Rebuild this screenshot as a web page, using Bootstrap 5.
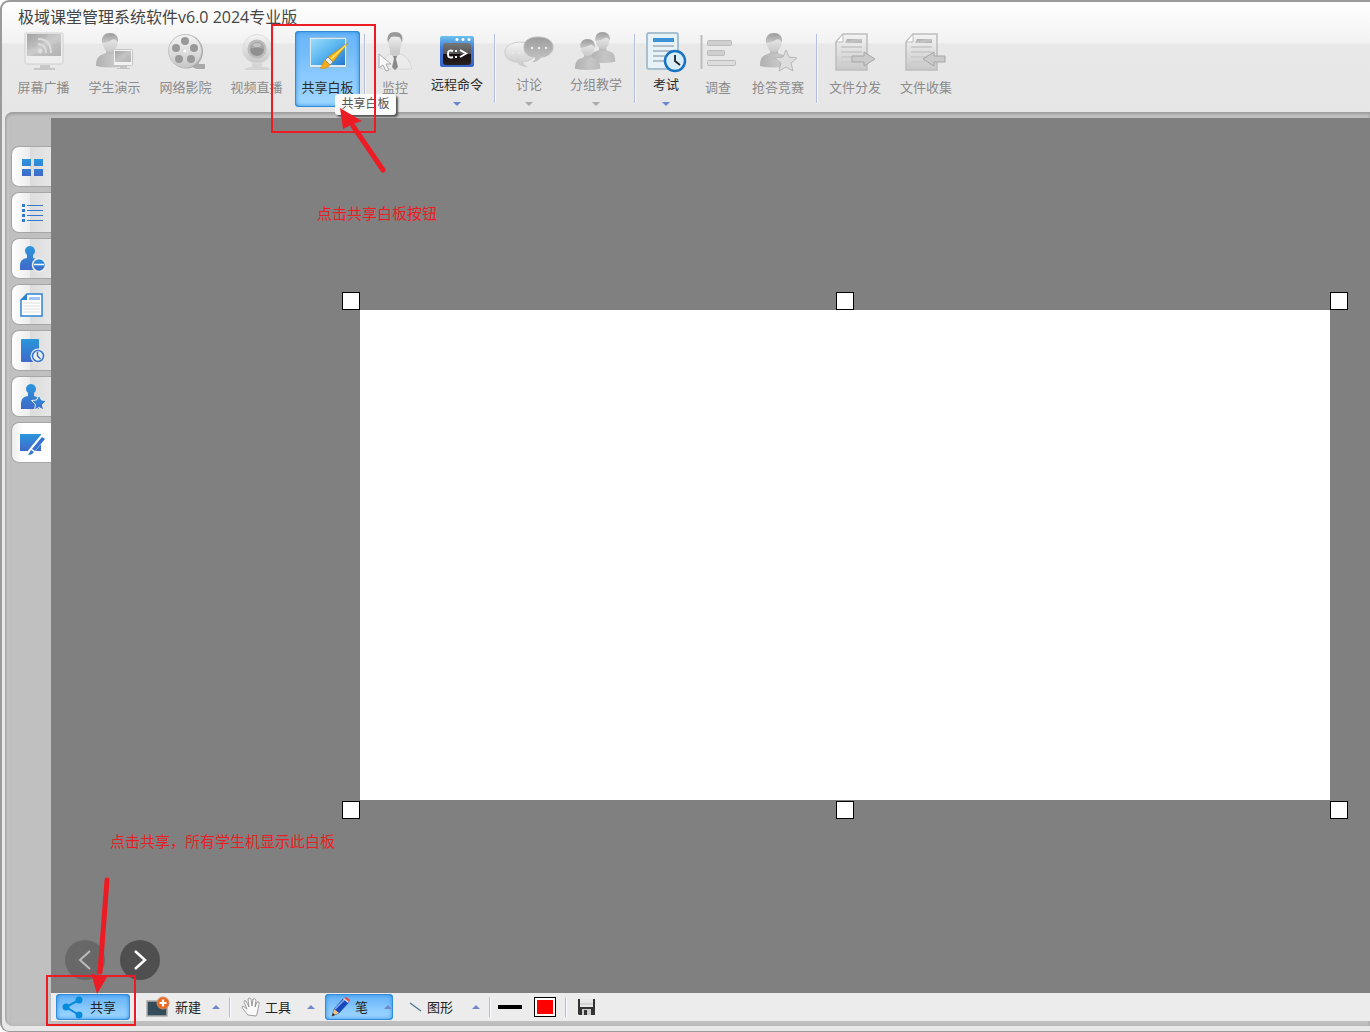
<!DOCTYPE html>
<html lang="zh-CN">
<head>
<meta charset="utf-8">
<meta name="viewport" content="width=device-width, initial-scale=1">
<title>极域课堂管理系统软件v6.0 2024专业版</title>
<link href="https://cdn.jsdelivr.net/npm/bootstrap@5.3.0/dist/css/bootstrap.min.css" rel="stylesheet">
<script src="https://cdn.jsdelivr.net/npm/bootstrap@5.3.0/dist/js/bootstrap.bundle.min.js"></script>
<style>
body{font-family:"Open Sans","Noto Sans CJK SC",sans-serif;font-size:13px;line-height:18px;color:#222;background:#fff}
svg{display:block;flex:none;overflow:visible}
.app-window{min-height:100vh;border:1px solid #999;border-width:2px 0 1px 2px;border-color:#9b9b9b;border-radius:9px 0 0 9px;background:#e8e8e8;padding:0 0 5px 3px}
.app-head{height:110px;margin-left:-3px;border-radius:8px 0 0 0;background:linear-gradient(#fff,#f2f2f2 41px,#e8e8e8 42px,#e6e6e6)}
.app-title{font-size:16px;line-height:24px;font-weight:400;color:#444;margin:0;padding:3px 0 2px 16px}
.ribbon{display:grid;grid-template-columns:repeat(5,71px) 4px 56px 68px 8px 60px 74px 4px 58px 46px 74px 4px 72px 70px;padding-left:6px}
.tool{border:0;background:none;padding:0;height:76px;display:flex;flex-direction:column;align-items:center;color:#2b2b2b;white-space:nowrap;width:100%}
.tool:disabled{color:#8b8b8b}
.tool .cap{margin-top:5px}
.tool.has-menu .cap{margin-top:2px}
.tool.has-menu::after{content:"";border:4px solid transparent;border-top-color:#6b86cc;border-bottom:0;margin-top:9px}
.tool.has-menu:disabled::after{border-top-color:#aaa}
.tool.picked{width:65px;margin:0 auto}
.picked{border-radius:4px;background:linear-gradient(#68b5fa,#74bdfa 30%,#8ccbff 60%,#a0d8ff);box-shadow:inset 0 0 0 1px #318ddb,inset 0 0 4px 1px #2f8fe0}
.vbar{width:2px;background:#b3bde2;border-right:1px solid #f8f8ff;justify-self:center;height:69px;margin-top:3px}
.vbar-s{width:2px;height:20px;background:#b3bde2;border-right:1px solid #f8f8ff}
.app-body{border-radius:8px 0 0 8px;background:linear-gradient(90deg,#a8a8a8,#c8c8c8 3px,#bbb 5px,#c1c1c1 6px);padding:6px 0 5px 6px;box-shadow:inset 0 2px 3px #999,inset 0 -3px 3px #bbb}
.rail{width:40px;padding:28px 0 0;background:#c0c0c0}
.rail-tab{display:flex;align-items:center;justify-content:center;width:40px;height:41px;border:1px solid #a6a6a6;border-right:0;border-radius:8px 0 0 8px;background:linear-gradient(90deg,#fff,#ececec 45%,#dcdcdc 47%,#e6e6e6);padding:0}
.rail-tab.current{background:linear-gradient(90deg,#eee,#fff 30%)}
.stage{background:#808080;padding:192px 40px 193px 309px;flex:1 1 auto}
.board{background:#fff;min-height:490px;flex:1}
.grip{position:absolute;width:18px;height:18px;background:#fff;border:1px solid #000}
.g-t{top:-18px}.g-b{bottom:-19px}.g-l{left:-18px}.g-c{left:calc(50% - 9px)}.g-r{right:-18px}
.pager{position:absolute;left:14px;bottom:13px;gap:15px}
.page-btn{width:40px;height:40px;border:0;border-radius:50%;background:#4f4f4f;padding:0;display:flex;align-items:center;justify-content:center}
.page-btn:disabled{background:#686868}
.drawbar{background:#ececec;height:28px}
.dbtn{border:0;background:none;padding:0;height:26px;display:flex;align-items:center;color:#222;white-space:nowrap}
.dbtn.picked{background:linear-gradient(#68b5fa,#74bdfa 30%,#8ccbff 60%,#a0d8ff)}
.up::after{content:"";border:4px solid transparent;border-bottom-color:#7288c6;border-top:0;margin-left:auto}
.d-share{width:74px;margin:0 5px;padding-left:6px;gap:7px}
.d-new{width:74px;margin:0 9px;gap:6px}
.d-hand{width:74px;margin:0 10px;gap:4px}
.d-pen{width:68px;padding:0 1px 0 6px;gap:4px}
.d-shape{width:71px;margin:0 9px 0 16px;gap:6px}
.d-line{width:24px;height:4px;background:#000;margin:0 12px 0 7px;border:0;padding:0}
.d-color{width:22px;height:20px;border:1px solid #000;background:#f00;box-shadow:inset 0 0 0 2px #fff;padding:0;margin-right:9px}
.d-save{margin-left:10px}
.tip{position:absolute;left:335px;top:94px;width:61px;height:21px;line-height:20px;font-size:12px;text-align:center;color:#555;background:#fafafa;border-radius:3px;box-shadow:2px 2px 2px #555}
.note{position:absolute;color:#ed1c24;font-size:15px;line-height:22px;white-space:nowrap}
.n-top{left:317px;top:202px}
.n-bottom{left:110px;bottom:180px}
.mark-box{position:absolute;border:2px solid #ed1c24;pointer-events:none}
.m-top{left:271px;top:24px;width:105px;height:109px}
.m-bottom{left:46px;bottom:6px;width:90px;height:51px}
.arrow{position:absolute;pointer-events:none}
.a-top{left:336px;top:104px}
.a-bottom{left:86px;bottom:36px}
</style>
</head>
<body>
<svg width="0" height="0" class="position-absolute" aria-hidden="true">
<defs>
<linearGradient id="gl" x2="0" y2="1"><stop stop-color="#f4f4f4"/><stop offset="1" stop-color="#c8c8c8"/></linearGradient>
<linearGradient id="gm" x2="0" y2="1"><stop stop-color="#9c9c9c"/><stop offset="1" stop-color="#c8c8c8"/></linearGradient>
<linearGradient id="gd" x2="1" y2="1"><stop stop-color="#a4a4a4"/><stop offset=".5" stop-color="#c4c4c4"/><stop offset="1" stop-color="#b2b2b2"/></linearGradient>
<linearGradient id="gs" x2="1" y2="0"><stop stop-color="#b0b0b0"/><stop offset=".6" stop-color="#c6c6c6"/><stop offset="1" stop-color="#bababa"/></linearGradient>
<linearGradient id="bl" x2="0" y2="1"><stop stop-color="#2b96dc"/><stop offset="1" stop-color="#3f69c9"/></linearGradient>
<linearGradient id="sky" x2="1" y2="1"><stop stop-color="#9bddfb"/><stop offset=".5" stop-color="#58b5ef"/><stop offset="1" stop-color="#2277cf"/></linearGradient>
<linearGradient id="cm" x2="0" y2="1"><stop stop-color="#6bc3ee"/><stop offset=".4" stop-color="#4278d8"/><stop offset="1" stop-color="#3665c8"/></linearGradient>
<linearGradient id="bk" x2="0" y2="1"><stop stop-color="#777"/><stop offset=".48" stop-color="#555"/><stop offset=".5" stop-color="#161010"/><stop offset="1" stop-color="#2a2020"/></linearGradient>
<g id="person"><path d="M0 33c0-8 3-11 8-12l3-2h6l3 2c6 1 8 4 8 12q-14 3-28 0z" fill="url(#gs)"/><path d="M10 15h8v5q-4 4-8 0z" fill="#bdbdbd"/><ellipse cx="14" cy="9.500" rx="7.500" ry="9.500" fill="url(#gl)"/><path d="M6 10C5 3 9 0 14 0s9 3 8 10q-1-3-4-4-5 3-12 4z" fill="url(#gm)"/></g>
<g id="sheet"><path d="M10 3h24v36H3V11z" fill="url(#gl)" stroke="#bdbdbd" stroke-width="1.500"/><path d="M3 11l7-8v8z" fill="#fff" stroke="#bbb"/><path d="M14 8h15v4H12z" fill="url(#gd)"/><path d="M8 16h21M8 21h21M8 26h21M8 31h14" stroke="#ccc" stroke-width="2"/></g>
</defs>
</svg>

<div class="app-window d-flex flex-column position-relative overflow-hidden">
<header class="app-head">
<h1 class="app-title">极域课堂管理系统软件v6.0 2024专业版</h1>
<nav class="ribbon" aria-label="课堂工具">
<button class="tool" disabled><svg width="44" height="42"><rect x="3" y="2" width="38" height="31" rx="1" fill="#eee" stroke="#d0d0d0"/><rect x="5" y="3" width="34" height="22" fill="url(#gd)"/><path d="M5 18C18 17 24 10 26 3h13v8C28 12 20 20 8 25H5z" fill="#fff" opacity=".12"/><circle cx="18" cy="20" r="2.500" fill="#ddd"/><path d="M16 13q8 0 8 9M16 8q13 0 13 14" fill="none" stroke="#ddd" stroke-width="2"/><path d="M18 34h10v3h5v2H12v-2h6z" fill="#c7c7c7"/></svg><span class="cap">屏幕广播</span></button>
<button class="tool" disabled><svg width="44" height="42"><use href="#person" x="3" y="2"/><rect x="20.500" y="18.500" width="19" height="16" rx="1" fill="#f2f2f2" stroke="#c4c4c4"/><rect x="22" y="20" width="16" height="11" fill="url(#gd)"/><path d="M27 35h7v2h3v1H24v-1h3z" fill="#c4c4c4"/></svg><span class="cap">学生演示</span></button>
<button class="tool" disabled><svg width="44" height="42"><path d="M25 33q5 5 9 5h7v-5h-6l-2-4z" fill="#aaa"/><circle cx="22" cy="20.500" r="17" fill="#a6a6a6"/><circle cx="21" cy="20" r="16.500" fill="url(#gl)" stroke="#c4c4c4"/><g fill="#999"><circle cx="21" cy="10" r="4"/><circle cx="12" cy="17" r="4"/><circle cx="30" cy="17" r="4"/><circle cx="15" cy="28" r="4"/><circle cx="27" cy="28" r="4"/></g><circle cx="21" cy="20" r="1.500" fill="#fff"/></svg><span class="cap">网络影院</span></button>
<button class="tool" disabled><svg width="44" height="42"><path d="M9 39q3-3 8-3v-5h10v5q7 0 9 3z" fill="#d5d5d5"/><circle cx="22" cy="18" r="14.500" fill="url(#gl)" stroke="#ddd"/><circle cx="22" cy="18" r="9.500" fill="#bbb"/><circle cx="22" cy="18" r="7" fill="#909090"/><path d="M15 18a7 7 0 0 1 14 0q-7-3-14 0z" fill="#aaa"/><ellipse cx="22" cy="14" rx="4" ry="2" fill="#c4c4c4"/></svg><span class="cap">视频直播</span></button>
<button class="tool picked"><svg width="44" height="42"><rect x="3.500" y="6.500" width="37" height="30" rx="1" fill="#dcebf5" stroke="#94bbd3"/><rect x="5" y="8" width="34" height="26" fill="url(#sky)"/><path d="M42 12L27 31l-5-5z" fill="#f7b51b" stroke="#c98510" stroke-width=".7"/><path d="M40 14L25 28" stroke="#ffe56d" stroke-width="1.500"/><path d="M22 26l5 5-3 3-5-5z" fill="#eee" stroke="#777" stroke-width=".7"/><path d="M19 29l5 5c-2 3-6 4-10 3 3-1 2-6 5-8z" fill="#f4ad18" stroke="#c98510" stroke-width=".6"/></svg><span class="cap">共享白板</span></button>
<span class="vbar"></span>
<button class="tool" disabled><svg width="44" height="42"><path d="M8 38q0-12 9-15h10q9 2 12 15z" fill="#ebebeb" stroke="#d8d8d8"/><path d="M17 18h10v5l-5 4-5-4z" fill="#ccc"/><ellipse cx="22" cy="12" rx="6.500" ry="10" fill="url(#gl)"/><path d="M15 12C13 4 17 1 22 1s9 3 7 11q-1-5-3-6-5-1-8 0-2 2-3 6z" fill="#999"/><path d="M20 25h4l-1 3 2 8-3 3-3-3 2-8z" fill="#888"/><path d="M6 23v14l4-3 3 6 3-1-3-6h5z" fill="#f7f7f7" stroke="#aaa"/></svg><span class="cap">监控</span></button>
<button class="tool has-menu"><svg width="44" height="42"><rect x="5" y="5" width="34" height="31" rx="2" fill="url(#cm)"/><rect x="8" y="12" width="28" height="22" rx="3" fill="url(#bk)"/><g fill="#fff"><circle cx="22" cy="8.500" r="1.500"/><circle cx="28" cy="8.500" r="1.500"/><circle cx="34" cy="8.500" r="1.500"/></g><path d="M18 20q-5-2-5 3t5 3M25 19l6 3.500-6 3.500" fill="none" stroke="#fff" stroke-width="2"/><path d="M20 19h2v2h-2zM20 25h2v2h-2z" fill="#fff"/></svg><span class="cap">远程命令</span></button>
<span class="vbar"></span>
<button class="tool has-menu" disabled><svg width="44" height="42"><path d="M13 11c8 0 15 4 15 10S22 31 15 31q2 4 5 5-7-1-10-5C3 31-2 27-2 21s7-10 15-10z" fill="url(#gl)" stroke="#ccc"/><path d="M31 6c9 0 15 4 15 10s-6 10-12 10q-3 4-8 5 3-2 3-5c-8 0-12-4-12-10S22 6 31 6z" fill="url(#gm)" stroke="#bbb"/><g fill="#eee"><circle cx="25" cy="17" r="1.200"/><circle cx="32" cy="17" r="1.200"/><circle cx="39" cy="17" r="1.200"/><circle cx="6" cy="22" r="1"/><circle cx="12" cy="22" r="1"/></g></svg><span class="cap">讨论</span></button>
<button class="tool has-menu" disabled><svg width="44" height="42"><g transform="translate(16 1) scale(.9)"><use href="#person"/></g><g transform="translate(1 8) scale(.9)"><use href="#person"/></g></svg><span class="cap">分组教学</span></button>
<span class="vbar"></span>
<button class="tool has-menu"><svg width="44" height="42"><rect x="3" y="2" width="31" height="36" rx="2" fill="#e7f1f8" stroke="#a8bfcd" stroke-width="2"/><path d="M9 7h21v4H9z" fill="#3b93d5"/><path d="M9 15h21M9 20h21M9 25h12M9 30h12" stroke="#b3c0ca" stroke-width="2"/><circle cx="31" cy="30" r="10" fill="#d7eefa" stroke="#1874c1" stroke-width="2.500"/><path d="M31 24v6l5 4" fill="none" stroke="#222" stroke-width="1.800"/></svg><span class="cap">考试</span></button>
<button class="tool" disabled><svg width="44" height="42"><path d="M5.500 4v34" stroke="#bdbdbd" stroke-width="2"/><g fill="#cfcfcf" stroke="#bcbcbc"><rect x="11.500" y="9.500" width="24" height="5" rx="1"/><rect x="11.500" y="19.500" width="17" height="5" rx="1"/><rect x="11.500" y="29.500" width="28" height="5" rx="1" fill="#ddd"/></g></svg><span class="cap">调查</span></button>
<button class="tool" disabled><svg width="44" height="42"><use href="#person" x="4" y="2"/><path d="M30 19l3 7 8 1-6 5 2 8-7-4-7 4 2-8-6-5 8-1z" fill="#ddd" stroke="#b8b8b8"/></svg><span class="cap">抢答竞赛</span></button>
<span class="vbar"></span>
<button class="tool" disabled><svg width="44" height="42"><use href="#sheet"/><path d="M19 25h12v-4l11 7-11 7v-4H19z" fill="#cacaca" stroke="#a6a6a6"/></svg><span class="cap">文件分发</span></button>
<button class="tool" disabled><svg width="44" height="42"><use href="#sheet" x="-1"/><path d="M41 25H30v-4l-11 7 11 7v-4h11z" fill="#cacaca" stroke="#a6a6a6"/></svg><span class="cap">文件收集</span></button>
</nav>
</header>

<div class="app-body d-flex flex-grow-1">
<nav class="rail flex-shrink-0" aria-label="视图">
<div class="d-grid" style="row-gap:5px">
<button class="rail-tab" aria-label="监视"><svg width="26" height="26" fill="url(#bl)"><path d="M3 5h9v7H3zM15 5h9v7h-9zM3 15h9v7H3zM15 15h9v7h-9z"/></svg></button>
<button class="rail-tab" aria-label="列表"><svg width="26" height="26" fill="#3278d0"><path d="M3 4h3v3H3zM3 9h3v3H3zM3 14h3v3H3zM3 19h3v3H3zM8 5h16v1H8zM8 10h16v1H8zM8 15h16v1H8zM8 20h16v1H8z"/></svg></button>
<button class="rail-tab" aria-label="学生"><svg width="26" height="26" fill="url(#bl)"><path d="M6 5a5 5 0 1 1 8 4v3q6 1 6 6v6H1v-5q0-6 7-7V9q-2-2-2-4z"/><circle cx="20" cy="19" r="6.500" stroke="#eee" stroke-width="1.500"/><path d="M15 18.500h10" stroke="#fff" stroke-width="1.500"/></svg></button>
<button class="rail-tab" aria-label="文件"><svg width="26" height="26"><path d="M8 2h15v22H2V8z" fill="#fff" stroke="#2c83d4" stroke-width="1.500"/><path d="M8 2v6H2z" fill="#2c83d4"/><path d="M10 5h11v3H10z" fill="#9cc4f5"/><path d="M4 11h17M4 14h17M4 17h17M4 20h17" stroke="#ddd"/></svg></button>
<button class="rail-tab" aria-label="考试"><svg width="26" height="26"><rect x="2" y="1" width="18" height="23" rx="1" fill="url(#bl)"/><circle cx="19" cy="18" r="7.500" fill="#e8e8e8"/><circle cx="19" cy="18" r="5.500" fill="#eee" stroke="#3474cf" stroke-width="1.500"/><path d="M18.500 14v4l3 3" fill="none" stroke="#3474cf" stroke-width="1.500"/></svg></button>
<button class="rail-tab" aria-label="竞赛"><svg width="26" height="26" fill="url(#bl)"><path d="M7 5a5 5 0 1 1 8 4v3q5 1 5 6v7H2v-6q0-6 7-7V9q-2-2-2-4z"/><path d="M20 11l2.500 5 5 .5-4 4 1 5.500-4.500-2.500-4.500 2.500 1-5.500-4-4 5-.5z" stroke="#eee" stroke-width="1"/></svg></button>
<button class="rail-tab current" aria-label="白板"><svg width="26" height="26"><path d="M1 4h21v17H1z" fill="url(#bl)"/><path d="M25 6L14 19l-3 4" stroke="#fff" stroke-width="6" fill="none"/><path d="M23 7l3 2-10 12-3-2zM12 20l3 2q-2 3-6 3 2-3 3-5z" fill="#3474cf"/></svg></button>
</div>
</nav>
<main class="d-flex flex-column flex-grow-1">
<section class="stage d-flex position-relative">
<div class="board position-relative" role="img" aria-label="白板"><i class="grip g-t g-l"></i><i class="grip g-t g-c"></i><i class="grip g-t g-r"></i><i class="grip g-b g-l"></i><i class="grip g-b g-c"></i><i class="grip g-b g-r"></i></div>
<div class="pager d-flex">
<button class="page-btn" disabled aria-label="上一页"><svg width="20" height="20"><path d="M15 1L5 10l10 9" fill="none" stroke="#bbb" stroke-width="2"/></svg></button>
<button class="page-btn" aria-label="下一页"><svg width="20" height="20"><path d="M5 1l10 9-10 9" fill="none" stroke="#fff" stroke-width="2.500"/></svg></button>
</div>
</section>
<div class="drawbar d-flex align-items-center" role="toolbar" aria-label="绘图工具">
<button class="dbtn picked d-share"><svg width="21" height="22"><path d="M17 4L4 11l13 8" fill="none" stroke="#078bdc" stroke-width="2"/><g fill="#078bdc"><circle cx="17" cy="4" r="3.500"/><circle cx="4" cy="11" r="3.500"/><circle cx="17" cy="19" r="3.500"/></g></svg>共享</button>
<span class="vbar-s"></span>
<button class="dbtn up d-new"><svg width="23" height="22"><rect x="1" y="5" width="20" height="15" fill="#344b59" stroke="#aaa" stroke-width="1.500"/><circle cx="17" cy="7" r="6" fill="#f06a20" stroke="#cf8a60"/><path d="M17 3.500v7M13.500 7h7" stroke="#fff" stroke-width="2.200"/></svg>新建</button>
<span class="vbar-s"></span>
<button class="dbtn up d-hand"><svg width="20" height="20"><path d="M7 18L2 12Q0 9 2 9l4 3L3 5q0-2 2-1l3 6L7 2q2-2 3 0l1 7 1-7q2-1 3 1l-1 7 2-5q3-1 2 2l-2 10-1 2z" fill="#fafafa" stroke="#888" stroke-width=".8"/></svg>工具</button>
<button class="dbtn picked up d-pen"><svg width="20" height="20"><path d="M1 19l2-7L13 1l5 4L8 16z" fill="#1749bd" stroke="#183a8b" stroke-width=".6"/><path d="M4 12L14 2" stroke="#8ab6ff" stroke-width="1.500"/><path d="M13 1q3-2 6 2l-1 2z" fill="#e94949"/><path d="M12 2l5 4 1-1-5-4z" fill="#ddd"/><path d="M1 19l2-7 5 4z" fill="#efc481"/><path d="M1 19l1-3 2 2z" fill="#222"/></svg>笔</button>
<button class="dbtn up d-shape"><svg width="12" height="10"><path d="M1 1l11 8" stroke="#48758f" stroke-width="1.300"/></svg>图形</button>
<span class="vbar-s"></span>
<button class="d-line" aria-label="线宽"></button>
<button class="d-color" aria-label="颜色"></button>
<span class="vbar-s"></span>
<button class="dbtn d-save" aria-label="保存"><svg width="19" height="18"><path d="M1 1h17v16H2l-1-1z" fill="#333"/><path d="M3 1h13v8H3z" fill="#e6e6e6"/><path d="M3 6h13" stroke="#bbb"/><path d="M5 11h9v6H5z" fill="#ccc"/><path d="M7 12h3v5H7z" fill="#333"/></svg></button>
</div>
</main>
</div>
</div>

<div class="tip" role="tooltip">共享白板</div>
<div class="mark-box m-top"></div>
<svg class="arrow a-top" width="52" height="70" fill="#ed1c24"><path d="M47 66L17 22" stroke="#ed1c24" stroke-width="5" stroke-linecap="round"/><path d="M4 4l22 13-9 3-10 5z"/></svg>
<div class="note n-top">点击共享白板按钮</div>
<div class="note n-bottom">点击共享，所有学生机显示此白板</div>
<div class="mark-box m-bottom"></div>
<svg class="arrow a-bottom" width="26" height="122" fill="#ed1c24"><path d="M21 6l-7 92" stroke="#ed1c24" stroke-width="5" stroke-linecap="round"/><path d="M11 120l10-17-8 0-8-4z"/></svg>
</body>
</html>
